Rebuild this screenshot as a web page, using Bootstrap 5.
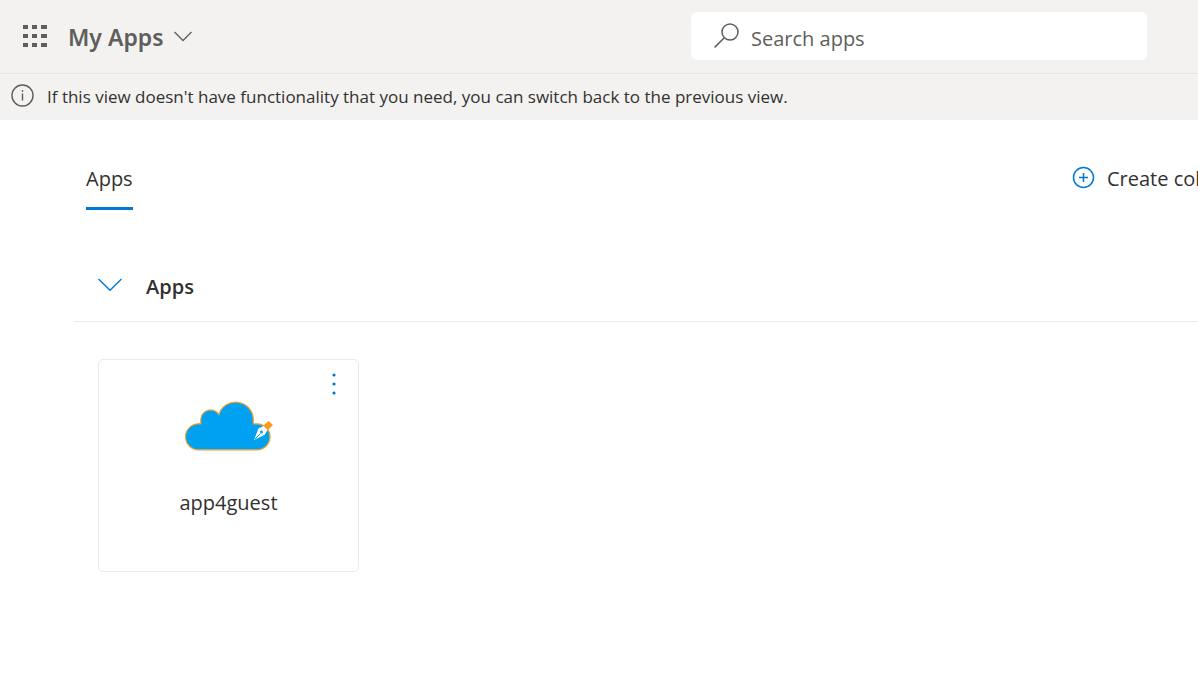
<!DOCTYPE html>
<html lang="en">
<head>
<meta charset="utf-8">
<meta name="viewport" content="width=device-width, initial-scale=1">
<title>My Apps</title>
<link href="https://cdn.jsdelivr.net/npm/bootstrap@5.3.0/dist/css/bootstrap.min.css" rel="stylesheet">
<style>
  body { font-family: "Open Sans", "Noto Sans", sans-serif; font-size: 20px; line-height: 28px; color: #323130; background: #fff; }
  svg { display: block; flex: none; }
  .chrome { background: #f3f2f1; }
  .topbar { height: 74px; border-bottom: 1px solid #e8e7e6; padding: 0 51px 1px 23px; }
  .plain { border: 0; background: none; padding: 0; color: inherit; }
  .brand-group { padding-top: 2px; }
  .brand { color: #605e5c; font-family: "Noto Sans", sans-serif; font-size: 23px; font-weight: 600; gap: 10px; }
  .search-box { width: 456px; height: 48px; border-radius: 6px; background: #fff; padding: 0 23px; gap: 12px; color: #605e5c; }
  .search-box input { border: 0; outline: 0; background: none; padding: 4px 0 0; min-width: 0; font-size: 20px; height: 32px; }
  .search-box input::placeholder { color: #605e5c; opacity: 1; }
  .notice { height: 46px; padding: 0 11px; gap: 13px; font-size: 17px; }
  .notice svg { margin-bottom: 3px; }
  main { padding: 40px 0 0 74px; }
  .tab-link { color: #323130; text-decoration: none; border-bottom: 3px solid #0078d4; padding: 5px 0 14px; }
  .tab-row { padding-left: 12px; }
  .create { width: 126px; gap: 12px; padding-top: 5px; white-space: nowrap; }
  .create svg { margin-bottom: 3px; }
  .section-head { margin-top: 49px; padding: 14px 24px 20px; border-bottom: 1px solid #eaeaea; gap: 24px; }
  .section-head button { padding-bottom: 5px; }
  .section-head h2 { font-size: 20px; line-height: 28px; font-weight: 600; }
  .app-tile { width: 261px; height: 213px; margin: 37px 0 0 24px; border: 1px solid #eaeaea; border-radius: 5px; padding-top: 41px; }
  .app-tile a { color: #323130; text-decoration: none; gap: 38px; }
  .more { top: 12px; right: 17px; }
</style>
</head>
<body class="overflow-hidden">
<header class="chrome">
  <div class="topbar d-flex align-items-center justify-content-between">
    <div class="brand-group d-flex align-items-center">
      <button class="plain" type="button" aria-label="App launcher">
        <svg width="25" height="24" fill="#605e5c"><path d="M0 0h5v4H0zM9 0h5v4H9zM18 0h6v4h-6zM0 9h5v4H0zM9 9h5v4H9zM18 9h6v4h-6zM0 18h5v4H0zM9 18h5v4H9zM18 18h6v4h-6z"/></svg>
      </button>
      <button class="plain brand d-flex align-items-center ms-3 ps-1" type="button">My Apps
        <svg width="18" height="12" fill="none" stroke="#605e5c" stroke-width="1.3"><path d="M.5 1 9 9.5 17.5 1"/></svg>
      </button>
    </div>
    <label class="search-box d-flex align-items-center">
      <svg width="25" height="26" fill="none" stroke="#605e5c" stroke-width="1.5"><circle cx="16" cy="9" r="8"/><path d="M10.3 14.7.6 24.4"/></svg>
      <input class="flex-fill" type="text" placeholder="Search apps" aria-label="Search apps">
    </label>
  </div>
  <div class="notice d-flex align-items-center">
    <svg width="23" height="23" fill="none" stroke="#605e5c" stroke-width="1.4"><circle cx="11.5" cy="11.5" r="10.5"/><path d="M11.5 9.5v7M11.5 6v1.8"/></svg>
    <span>If this view doesn't have functionality that you need, you can switch back to the previous view.</span>
  </div>
</header>
<main>
  <div class="tab-row d-flex justify-content-between align-items-start">
    <nav class="d-flex"><a class="tab-link" href="#apps" aria-current="page">Apps</a></nav>
    <button class="plain create d-flex align-items-center overflow-hidden" type="button">
      <svg width="23" height="23" fill="none" stroke="#0078d4" stroke-width="1.5"><circle cx="11.5" cy="11.5" r="10"/><path d="M11.5 7v9M7 11.5h9"/></svg>
      <span>Create collection</span>
    </button>
  </div>
  <section id="apps">
    <div class="section-head d-flex align-items-center">
      <button class="plain" type="button" aria-label="Collapse Apps">
        <svg width="24" height="14" fill="none" stroke="#0078d4" stroke-width="1.4"><path d="M.5 1 12 12.3 23.5 1"/></svg>
      </button>
      <h2 class="m-0">Apps</h2>
    </div>
    <article class="app-tile position-relative">
      <a class="d-flex flex-column align-items-center" href="#app4guest">
        <svg width="88" height="50" viewBox="0 0 88 50">
          <path d="M13.500 48.800A13 13 0 0 1 13.500 22.800H15.800V18.800A9.800 9.800 0 0 1 33.900 13.500A17.600 17.600 0 0 1 68.300 18.300V22.800H72A13 13 0 0 1 72 48.800Z" fill="#00a1f1" stroke="#f0a02e" stroke-width="1.200"/>
          <path d="m78 25 5.500-5 4.500 4-5.500 5.500z" fill="#ff9a17"/>
          <path d="m69 39 4.500-11.500 5-2.500 4 4-3 5z" fill="#fff"/>
          <path d="m70 38 5.500-5.500" stroke="#00a1f1"/><circle cx="76.500" cy="31" r="1.500" fill="#00a1f1"/>
        </svg>
        <span>app4guest</span>
      </a>
      <button class="plain more position-absolute" type="button" aria-label="More options">
        <svg width="14" height="24" fill="#0078d4"><circle cx="7" cy="3" r="1.600"/><circle cx="7" cy="12" r="1.600"/><circle cx="7" cy="21" r="1.600"/></svg>
      </button>
    </article>
  </section>
</main>
<script src="https://cdn.jsdelivr.net/npm/bootstrap@5.3.0/dist/js/bootstrap.bundle.min.js"></script>
</body>
</html>
